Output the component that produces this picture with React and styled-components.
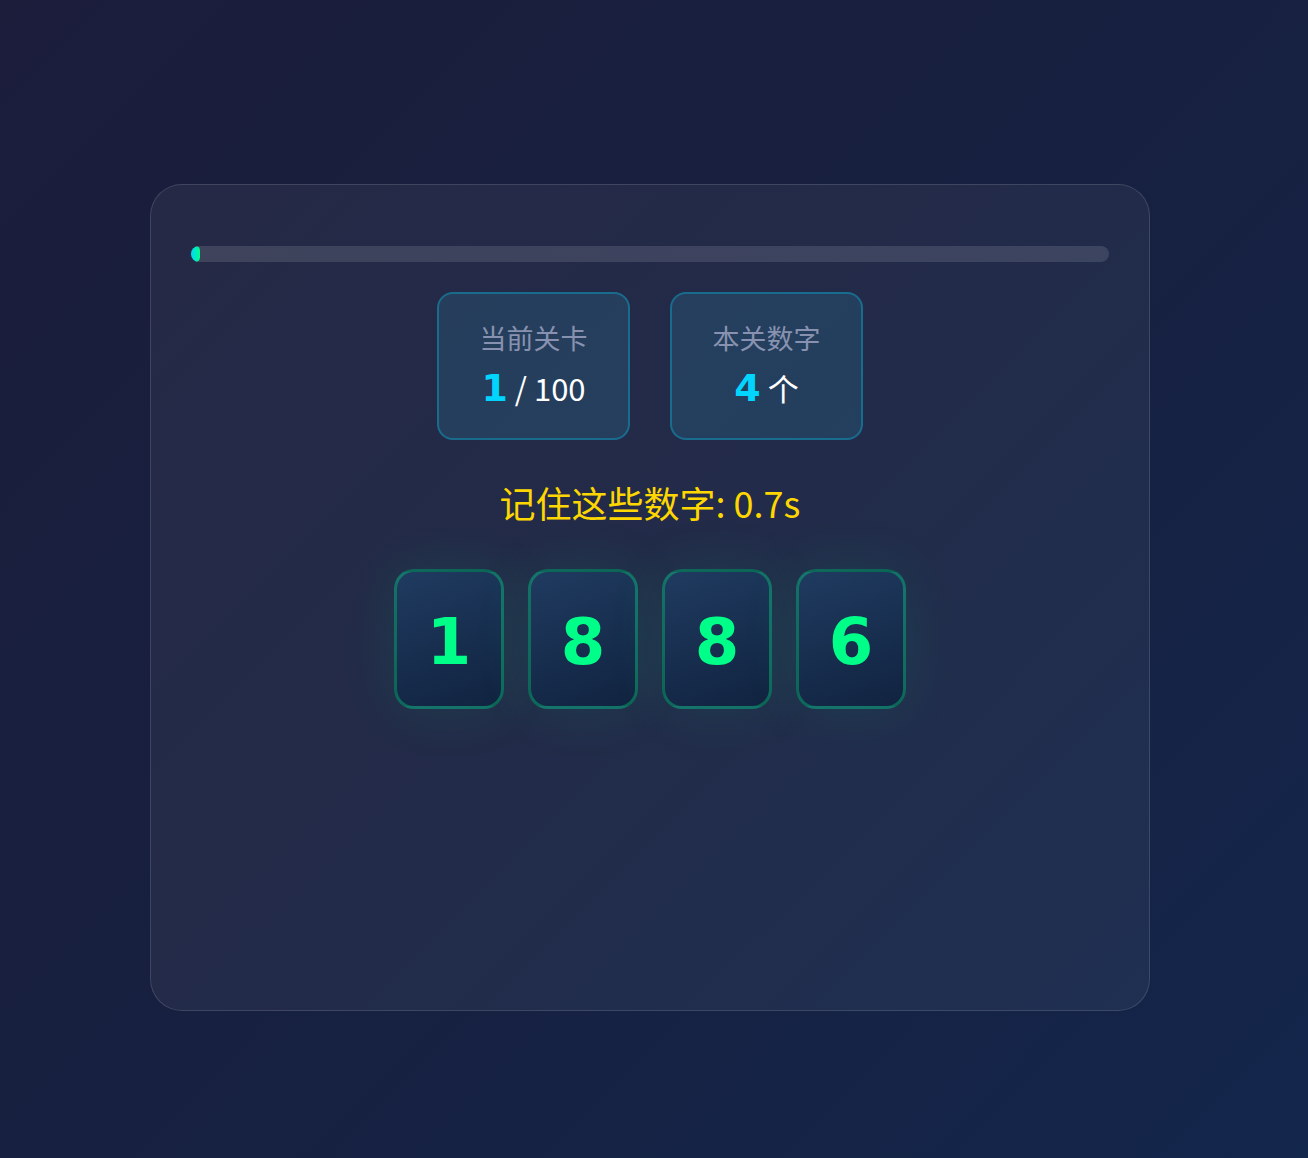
import React from "react";
import styled, { createGlobalStyle } from "styled-components";

const DIGITS = [1, 8, 8, 6];
const LEVEL = 1;
const TOTAL = 100;

export default function App() {
  const progress = (LEVEL / TOTAL) * 100;

  return (
    <>
      <GlobalStyle />
      <Page>
        <Card>
          <Track>
            <Fill style={{ width: `${progress}%` }} />
          </Track>

          <Stats>
            <StatBox>
              <StatLabel>当前关卡</StatLabel>
              <StatValue>
                <Num>{LEVEL}</Num> / {TOTAL}
              </StatValue>
            </StatBox>
            <StatBox>
              <StatLabel>本关数字</StatLabel>
              <StatValue>
                <Num>{DIGITS.length}</Num> 个
              </StatValue>
            </StatBox>
          </Stats>

          <Hint>记住这些数字: 0.7s</Hint>

          <DigitRow>
            {DIGITS.map((d, i) => (
              <DigitCard key={i}>{d}</DigitCard>
            ))}
          </DigitRow>
        </Card>
      </Page>
    </>
  );
}

// Styled Components
const GlobalStyle = createGlobalStyle`
  * {
    box-sizing: border-box;
  }
  body {
    margin: 0;
    font-family: "Noto Sans CJK SC", "Noto Sans", sans-serif;
    background: linear-gradient(135deg, #1b1d3b 0%, #172040 50%, #13264b 100%);
    min-height: 100vh;
  }
`;

const Page = styled.div`
  min-height: 1158px;
  display: flex;
  justify-content: center;
  align-items: flex-start;
  padding: 184px 8px 0 0;
`;

const Card = styled.div`
  width: 1000px;
  min-height: 827px;
  padding: 40px;
  border-radius: 32px;
  background: rgba(255, 255, 255, 0.05);
  border: 1px solid rgba(255, 255, 255, 0.13);
  display: flex;
  flex-direction: column;
  align-items: center;
`;

const Track = styled.div`
  width: 100%;
  height: 16px;
  margin-top: 21px;
  border-radius: 8px;
  background: rgba(255, 255, 255, 0.12);
  overflow: hidden;
`;

const Fill = styled.div`
  height: 100%;
  border-radius: 8px;
  background: linear-gradient(90deg, #00d4ff, #00ff88);
`;

const Stats = styled.div`
  display: flex;
  justify-content: center;
  gap: 40px;
  margin-top: 30px;
`;

const StatBox = styled.div`
  min-width: 193px;
  height: 148px;
  padding: 18px 38px 16px;
  border-radius: 16px;
  background: rgba(60, 210, 246, 0.12);
  border: 2px solid rgba(0, 212, 255, 0.3);
  display: flex;
  flex-direction: column;
  align-items: center;
  justify-content: center;
  gap: 9px;
`;

const StatLabel = styled.div`
  color: #8892b0;
  font-size: 27px;
  line-height: 1.3;
`;

const StatValue = styled.div`
  color: #ffffff;
  font-size: 31px;
  line-height: 1.3;
  white-space: nowrap;
`;

const Num = styled.span`
  color: #00d4ff;
  font-family: "DejaVu Sans", sans-serif;
  font-weight: bold;
  font-size: 38px;
`;

const Hint = styled.div`
  margin-top: 40px;
  color: #ffd700;
  font-size: 36px;
  line-height: 1.25;
`;

const DigitRow = styled.div`
  display: flex;
  justify-content: center;
  gap: 24px;
  margin-top: 44px;
`;

const DigitCard = styled.div`
  width: 110px;
  height: 140px;
  border-radius: 20px;
  border: 3px solid rgba(0, 255, 136, 0.3);
  background: linear-gradient(160deg, #1f3b60 0%, #112340 100%);
  box-shadow: 0 0 60px rgba(0, 255, 136, 0.09);
  display: flex;
  align-items: center;
  justify-content: center;
  color: #00ff88;
  font-family: "DejaVu Sans", sans-serif;
  font-weight: bold;
  font-size: 64px;
  padding-top: 6px;
`;
